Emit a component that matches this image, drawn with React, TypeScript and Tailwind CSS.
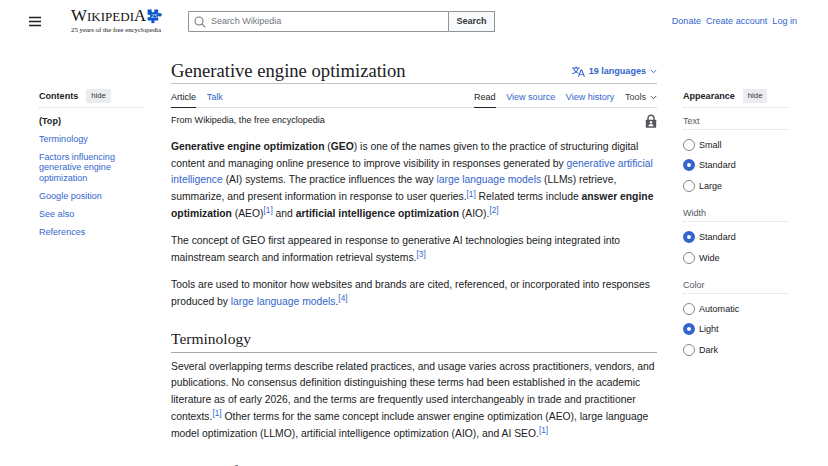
import type { ReactNode } from 'react';

interface TocItem {
  label: string;
}

interface OptionGroup {
  title: string;
  options: string[];
  selected: string;
}

const tocItems: TocItem[] = [
  { label: 'Terminology' },
  { label: 'Factors influencing generative engine optimization' },
  { label: 'Google position' },
  { label: 'See also' },
  { label: 'References' },
];

const optionGroups: OptionGroup[] = [
  { title: 'Text', options: ['Small', 'Standard', 'Large'], selected: 'Standard' },
  { title: 'Width', options: ['Standard', 'Wide'], selected: 'Standard' },
  { title: 'Color', options: ['Automatic', 'Light', 'Dark'], selected: 'Light' },
];

function Link({ children }: { children: ReactNode }) {
  return <a className="text-[#3366cc]">{children}</a>;
}

function Ref({ n }: { n: number }) {
  return <sup className="relative top-[-3.6px] align-baseline text-[8.28px] leading-none text-[#3366cc]">[{n}]</sup>;
}

function Chevron() {
  return (
    <svg viewBox="0 0 8 8" className="h-[7px] w-[7px]" fill="none" stroke="currentColor" strokeWidth="1.1">
      <path d="M1 2.4 4 5.4 7 2.4" />
    </svg>
  );
}

function Logo() {
  return (
    <svg viewBox="0 0 92 26" className="h-[26px] w-[92px] overflow-visible" fontFamily="Liberation Serif, serif">
      <g fill="#111">
        <text x="0" y="11.5" fontSize="16" textLength="16" lengthAdjust="spacingAndGlyphs">W</text>
        <text x="16" y="11.5" fontSize="12.6" textLength="47" lengthAdjust="spacingAndGlyphs">IKIPEDI</text>
        <text x="63" y="11.5" fontSize="16" textLength="12" lengthAdjust="spacingAndGlyphs">A</text>
        <text x="0" y="23.4" fontSize="6.6" textLength="90" lengthAdjust="spacingAndGlyphs">
          25 years of the free encyclopedia
        </text>
      </g>
      <path
        d="M76.600.5h3.600c.5 0 .7.4.5.9-.4 1.100.3 1.800 1.300 1.800s1.700-.7 1.300-1.800c-.2-.5 0-.9.5-.9h3.400v3.300c0 .6.4.8.9.4 1.300-.8 2.600.1 2.600 1.500s-1.300 2.400-2.600 1.600c-.5-.4-.9-.2-.9.4v3.800h-3.400c-.6 0-.7.4-.4.8.7 1.200-.2 2-1.500 2s-2.200-.8-1.500-2c.3-.4.2-.8-.4-.8h-3.400V8.700c0-.6.4-.7.9-.5 1.100.5 1.800-.3 1.800-1.200s-.7-1.700-1.800-1.200c-.5.2-.9 0-.9-.5z"
        fill="#0c57c8"
      />
      <text x="80" y="9" fontSize="6.5" fill="#fff">25</text>
    </svg>
  );
}

function Header() {
  return (
    <header className="flex h-[43px] items-center pl-[29px] pr-[31px] text-[9.06px]">
      <svg viewBox="0 0 12 12" className="h-3 w-3" stroke="#202122" strokeWidth="1.3">
        <path d="M0 1.500h12M0 5.500h12M0 9.500h12" />
      </svg>
      <div className="ml-[30px] w-[117px]">
        <Logo />
      </div>
      <div className="flex h-[21px] w-[307px]">
        <div className="flex flex-1 items-center rounded-l-[1px] border border-[#909397] pl-[5px] text-[#72777d]">
          <svg viewBox="0 0 12 12" className="mr-[5px] h-3 w-3" fill="none" stroke="currentColor" strokeWidth="1.1">
            <circle cx="5" cy="5" r="4" />
            <path d="m7.800 7.800 3.600 3.600" />
          </svg>
          Search Wikipedia
        </div>
        <button className="w-[46px] rounded-r-[1px] border border-l-0 border-[#909397] bg-[#f8f9fa] font-bold text-[#36383b]">
          Search
        </button>
      </div>
      <nav className="ml-auto flex gap-[5px]">
        <Link>Donate</Link>
        <Link>Create account</Link>
        <Link>Log in</Link>
      </nav>
    </header>
  );
}

function PanelHeading({ title }: { title: string }) {
  return (
    <div className="flex h-[19px] items-start gap-2 border-b border-dotted border-[#d8dade] text-[9.06px] font-bold">
      <span className="leading-[14px]">{title}</span>
      <button className="h-[14px] rounded-[1px] bg-[#eaecf0] px-[5px] text-[7.76px] font-normal leading-[14px] text-[#36383b]">
        hide
      </button>
    </div>
  );
}

function Contents() {
  return (
    <aside className="w-[105px] pt-[46px] text-[9.06px] leading-[10.35px]">
      <PanelHeading title="Contents" />
      <ul className="flex w-[92px] flex-col gap-[7.76px] pt-[7.8px]">
        <li className="font-bold">(Top)</li>
        {tocItems.map((item) => (
          <li key={item.label}>
            <Link>{item.label}</Link>
          </li>
        ))}
      </ul>
    </aside>
  );
}

function Appearance() {
  return (
    <aside className="w-[106px] pt-[46px] text-[9.06px]">
      <PanelHeading title="Appearance" />
      {optionGroups.map((group) => (
        <section key={group.title} className="mb-[4.2px] pt-[3.5px]">
          <h3 className="h-[18.5px] border-b border-dotted border-[#d8dade] leading-[18px] text-[#54595d]">
            {group.title}
          </h3>
          <div className="pt-[4.2px]">
            {group.options.map((option) => (
              <label key={option} className="flex h-[20.7px] items-center gap-1">
                {option === group.selected ? (
                  <span className="h-3 w-3 rounded-full border-4 border-[#3366cc] bg-white" />
                ) : (
                  <span className="h-3 w-3 rounded-full border border-[#85898f] bg-white" />
                )}
                <span className="leading-3">{option}</span>
              </label>
            ))}
          </div>
        </section>
      ))}
    </aside>
  );
}

function Toolbar() {
  return (
    <div className="flex h-6 gap-[10.5px] border-b border-[#dcdee2] text-[9.06px] leading-[27px]">
      <span className="h-6 border-b border-[#202122]">Article</span>
      <Link>Talk</Link>
      <span className="ml-auto h-6 border-b border-[#202122]">Read</span>
      <Link>View source</Link>
      <Link>View history</Link>
      <span className="flex h-[27px] items-center gap-1 text-[#404244]">
        Tools <Chevron />
      </span>
    </div>
  );
}

function SectionHeading({ children }: { children: ReactNode }) {
  return (
    <h2 className="mb-[5.9px] mt-[18px] h-[24px] border-b border-[#a2a9b1] font-['Liberation_Serif',serif] text-[15.53px] leading-[20px]">
      {children}
    </h2>
  );
}

function Article() {
  return (
    <main className="w-[486px] pt-[15px]">
      <div className="flex h-[26px] items-center border-b border-[#c0c3c8]">
        <h1 className="font-['Liberation_Serif',serif] text-[18.63px] leading-6">Generative engine optimization</h1>
        <div className="ml-auto flex items-center pt-[2px] text-[9.06px] font-bold text-[#3366cc]">
          <svg viewBox="0 0 20 20" className="mr-1 h-[13px] w-[13px]" fill="currentColor">
            <path d="M20 18h-1.440a.6.6 0 0 1-.4-.120.800.800 0 0 1-.230-.310L17 15h-5l-1 2.540a.800.800 0 0 1-.220.300.600.600 0 0 1-.400.140H9l4.550-11.470h1.890zm-3.530-4.310L14.890 9.500a12 12 0 0 1-.390-1.240q-.090.370-.190.690l-.190.560-1.580 4.190zm-6.300-1.580a13.400 13.400 0 0 1-2.910-1.410 11.460 11.460 0 0 0 2.810-5.370H12V4H7.310a4 4 0 0 0-.200-.560C6.870 2.790 6.600 2 6.600 2l-1.470.500s.400.890.600 1.500H0v1.330h2.150A11.230 11.230 0 0 0 5 10.700a17.200 17.200 0 0 1-5 2.100q.560.820.870 1.380a23.300 23.300 0 0 0 5.220-2.510 15.600 15.600 0 0 0 3.560 1.770zM3.630 5.330h4.910a8.100 8.100 0 0 1-2.450 4.450 9.100 9.100 0 0 1-2.460-4.450" />
          </svg>
          19 languages
          <span className="ml-1">
            <Chevron />
          </span>
        </div>
      </div>
      <Toolbar />
      <div className="flex h-[26px] items-center justify-between text-[9.06px]">
        From Wikipedia, the free encyclopedia
        <svg viewBox="0 0 12 14" className="h-[14px] w-[12px]" fill="none">
          <path d="M3 7V4.200a3 3 0 0 1 6 0V7" stroke="#54565a" strokeWidth="1.4" />
          <rect x=".8" y="5.7" width="10.4" height="8" rx=".6" fill="#54565a" />
          <circle cx="6" cy="8.3" r="1.2" fill="#fff" />
          <path d="M3.500 12.200c0-2.800 5-2.800 5 0z" fill="#fff" />
        </svg>
      </div>
      <div className="pt-[4.7px] text-[10.35px] leading-[16.82px]">
        <p className="mb-[10.35px]">
          <b>Generative engine optimization</b> (<b>GEO</b>) is one of the names given to the practice of structuring digital
          content and managing online presence to improve visibility in responses generated by{' '}
          <Link>generative artificial intelligence</Link> (AI) systems. The practice influences the way{' '}
          <Link>large language models</Link> (LLMs) retrieve, summarize, and present information in response to user
          queries.
          <Ref n={1} /> Related terms include <b>answer engine optimization</b> (AEO)
          <Ref n={1} /> and <b>artificial intelligence optimization</b> (AIO).
          <Ref n={2} />
        </p>
        <p className="mb-[10.35px]">
          The concept of GEO first appeared in response to generative AI technologies being integrated into mainstream
          search and information retrieval systems.
          <Ref n={3} />
        </p>
        <p>
          Tools are used to monitor how websites and brands are cited, referenced, or incorporated into responses
          produced by <Link>large language models</Link>.
          <Ref n={4} />
        </p>
        <SectionHeading>Terminology</SectionHeading>
        <p className="pb-[0.3px]">
          Several overlapping terms describe related practices, and usage varies across practitioners, vendors, and
          publications. No consensus definition distinguishing these terms had been established in the academic
          literature as of early 2026, and the terms are frequently used interchangeably in trade and practitioner
          contexts.
          <Ref n={1} /> Other terms for the same concept include answer engine optimization (AEO), large language model
          optimization (LLMO), artificial intelligence optimization (AIO), and AI SEO.
          <Ref n={1} />
        </p>
        <SectionHeading>Factors influencing generative engine optimization</SectionHeading>
      </div>
    </main>
  );
}

export default function App() {
  return (
    <div className="h-[466px] w-[828px] overflow-hidden bg-white font-['Liberation_Sans',Arial,sans-serif] text-[#202122]">
      <Header />
      <div className="flex pl-[39px]">
        <Contents />
        <div className="ml-[27px] mr-[26px]">
          <Article />
        </div>
        <Appearance />
      </div>
    </div>
  );
}
